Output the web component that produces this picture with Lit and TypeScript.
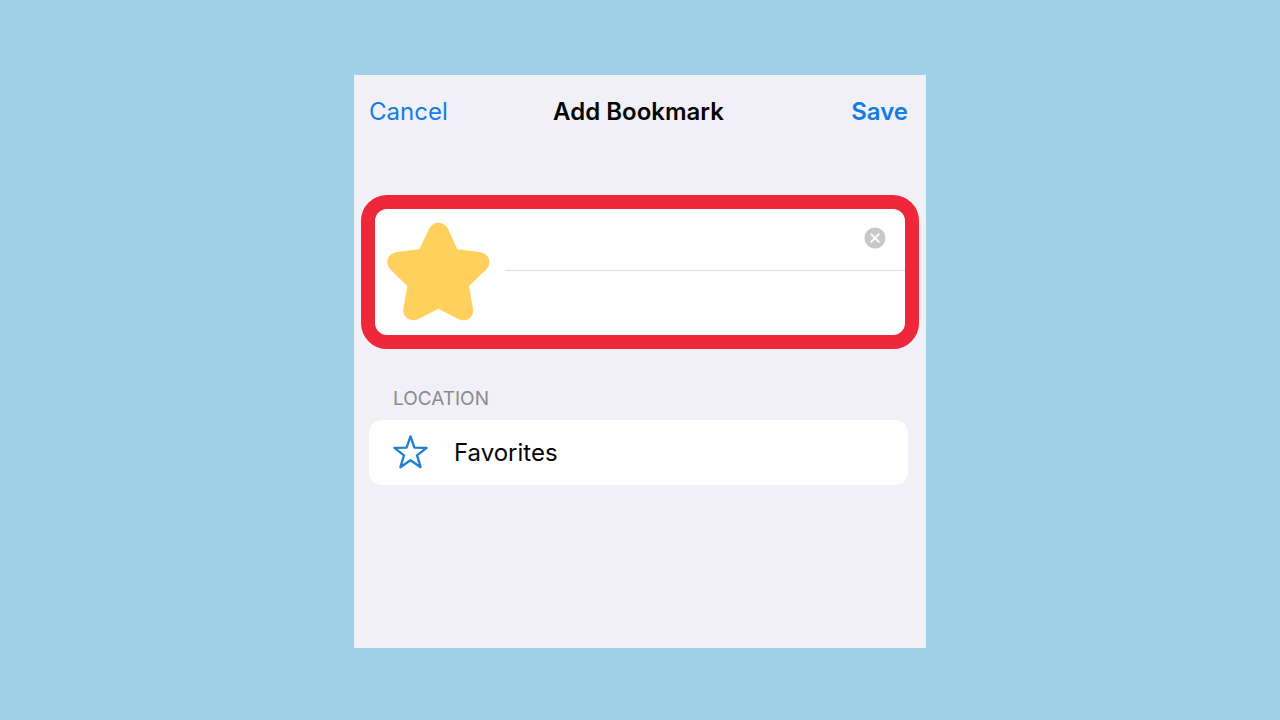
import { LitElement, html, css } from "lit";
import { customElement, state } from "lit/decorators.js";

@customElement("app-root")
export class AppRoot extends LitElement {
  static styles = css`
    :host {
      display: flex;
      justify-content: center;
      box-sizing: border-box;
      min-height: 100vh;
      padding: 75px 16px 72px;
      background: #a0d0e7;
      color: #050506;
      font-family: Inter, Roboto, sans-serif;
      font-size: 24px;
      line-height: 32px;
    }
    * {
      box-sizing: border-box;
    }
    button,
    input {
      margin: 0;
      padding: 0;
      border: 0;
      background: none;
      color: inherit;
      font: inherit;
    }
    button {
      cursor: pointer;
    }
    svg {
      display: block;
      overflow: visible;
    }
    .sheet {
      width: 100%;
      max-width: 572px;
      background: #f1f0f6;
    }
    .bar {
      display: grid;
      grid-template-columns: 1fr auto 1fr;
      align-items: center;
      padding: 21px 18px 19px 15px;
    }
    .action {
      color: #147ce5;
    }
    .cancel {
      justify-self: start;
    }
    .save {
      justify-self: end;
      font-weight: 600;
    }
    .title {
      margin: 0;
      font-size: inherit;
      font-weight: 600;
    }
    .details {
      display: flex;
      align-items: center;
      gap: 16px;
      margin: 48px 7px 0;
      padding-left: 12px;
      border: 14px solid #ee273a;
      border-radius: 26px;
      background: #fefefe;
    }
    .thumb {
      flex: none;
      width: 102px;
      height: 98px;
    }
    .fields {
      flex: 1;
      min-width: 0;
    }
    .field {
      display: flex;
      align-items: center;
      gap: 12px;
      height: 64px;
      padding-right: 19px;
    }
    .name {
      height: 62px;
      padding-bottom: 4px;
      border-bottom: 1px solid #dcdcdd;
    }
    .field input {
      flex: 1;
      min-width: 0;
      outline: none;
    }
    .clear svg {
      width: 22px;
      height: 22px;
    }
    .caption {
      margin: 0;
      padding: 38px 39px 9px;
      color: #8a8a8f;
      font-size: 19px;
      font-weight: 400;
      line-height: 24px;
    }
    .location {
      display: flex;
      align-items: center;
      gap: 26px;
      width: calc(100% - 33px);
      margin: 0 18px 0 15px;
      padding: 16px 24px 15px;
      border-radius: 13px;
      background: #fefefe;
      text-align: left;
    }
    .location svg {
      width: 35px;
      height: 34px;
    }
  `;

  @state() private name = "";

  render() {
    return html`
      <main class="sheet">
        <header class="bar">
          <button class="action cancel" type="button">Cancel</button>
          <h1 class="title">Add Bookmark</h1>
          <button class="action save" type="submit" form="bookmark">Save</button>
        </header>
        <form
          id="bookmark"
          class="details"
          @submit=${(e: Event) => e.preventDefault()}
        >
          <svg class="thumb" viewBox="97 113 306 294" aria-hidden="true">
            <path
              fill="#ffd05b"
              d="M194 192 L222 133 C235 105 268 105 281 133 L308 192 L374 200 C404 204 414 233 393 254 L343 302 L355 370 C359 396 334 412 312 402 L251 370 L190 402 C168 412 143 396 146 370 L158 302 L109 254 C88 233 98 204 128 200 Z"
            />
          </svg>
          <div class="fields">
            <div class="field name">
              <input
                type="text"
                aria-label="Title"
                .value=${this.name}
                @input=${(e: Event) =>
                  (this.name = (e.target as HTMLInputElement).value)}
              />
              <button
                class="clear"
                type="button"
                aria-label="Clear title"
                @click=${() => (this.name = "")}
              >
                <svg viewBox="0 0 22 22" aria-hidden="true">
                  <circle cx="11" cy="11" r="10.5" fill="#c8c8c9" />
                  <path
                    d="M7.2 7.2 L14.8 14.8 M14.8 7.2 L7.2 14.8"
                    stroke="#fff"
                    stroke-width="1.8"
                    stroke-linecap="round"
                  />
                </svg>
              </button>
            </div>
            <div class="field">
              <input type="url" aria-label="Address" />
            </div>
          </div>
        </form>
        <h2 class="caption">LOCATION</h2>
        <button class="location" type="button">
          <svg viewBox="0 1 35 34" aria-hidden="true">
            <path
              d="M17.5 1.4 L21.4 12.6 L33.6 12.9 L24 20.3 L27.6 32.2 L17.5 25.2 L7.4 32.2 L11 20.3 L1.4 12.9 L13.6 12.6 Z"
              fill="none"
              stroke="#1f7fd6"
              stroke-width="2.3"
              stroke-linejoin="round"
            />
          </svg>
          <span>Favorites</span>
        </button>
      </main>
    `;
  }
}
